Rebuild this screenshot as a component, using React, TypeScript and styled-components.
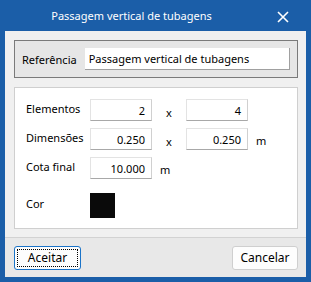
import styled, { createGlobalStyle } from 'styled-components';

const GlobalStyle = createGlobalStyle`
  *, *::after, *::before {
    box-sizing: border-box;
  }
  html, body {
    margin: 0;
    padding: 0;
    background: #ffffff;
  }
  body {
    font-family: 'Noto Sans', 'Open Sans', sans-serif;
    font-size: 11px;
    color: #000000;
  }
`;

const rows = [
  { label: 'Elementos', a: '2', b: '4', unit: '' },
  { label: 'Dimensões', a: '0.250', b: '0.250', unit: 'm' },
];

function App() {
  return (
    <>
      <GlobalStyle />
      <Window>
        <TitleBar>
          <Title>Passagem vertical de tubagens</Title>
          <CloseButton>
            <svg width="12" height="12" viewBox="0 0 12 12">
              <path d="M1 1 L11 11 M11 1 L1 11" stroke="#ffffff" strokeWidth="1.6" />
            </svg>
          </CloseButton>
        </TitleBar>
        <Body>
          <RefBox>
            <RefLabel>Referência</RefLabel>
            <RefInput>Passagem vertical de tubagens</RefInput>
          </RefBox>
          <Panel>
            {rows.map((row) => (
              <Row key={row.label}>
                <Label>{row.label}</Label>
                <NumField>{row.a}</NumField>
                <Times>x</Times>
                <NumField>{row.b}</NumField>
                <Unit>{row.unit}</Unit>
              </Row>
            ))}
            <Row>
              <Label>Cota final</Label>
              <NumField>10.000</NumField>
              <Unit>m</Unit>
            </Row>
            <ColorRow>
              <Label>Cor</Label>
              <Swatch />
            </ColorRow>
          </Panel>
        </Body>
        <Footer>
          <Button $primary>
            <FocusRing>Aceitar</FocusRing>
          </Button>
          <Button>Cancelar</Button>
        </Footer>
      </Window>
    </>
  );
}

export default App;

const Window = styled.div`
  width: 311px;
  height: 282px;
  background: #1b5ea8;
  padding: 0 5px 5px 5px;
  display: flex;
  flex-direction: column;
`;

const TitleBar = styled.div`
  height: 31px;
  display: flex;
  align-items: center;
  justify-content: center;
  position: relative;
  color: #ffffff;
  padding-right: 48px;
`;

const Title = styled.div`
  font-size: 11px;
  padding-bottom: 1px;
`;

const CloseButton = styled.div`
  position: absolute;
  right: 17px;
  top: 11px;
  width: 12px;
  height: 12px;
  display: flex;
`;

const Body = styled.div`
  background: #f0f0f0;
  flex: 1;
  padding: 9px 8px 0 9px;
  display: flex;
  flex-direction: column;
  gap: 9px;
`;

const RefBox = styled.div`
  height: 38px;
  border: 1px solid #7a7a7a;
  background: #e6e6e6;
  display: flex;
  align-items: center;
  padding: 0 7px 0 7px;
  gap: 8px;
`;

const RefLabel = styled.div`
  padding-top: 1px;
`;

const RefInput = styled.div`
  flex: 1;
  height: 22px;
  background: #ffffff;
  border-right: 1px solid #a0a0a0;
  border-bottom: 1px solid #a0a0a0;
  display: flex;
  align-items: center;
  padding: 0 4px;
`;

const Panel = styled.div`
  height: 142px;
  background: #ffffff;
  border: 1px solid #cfcfcf;
  padding: 11px 0 0 11px;
  display: flex;
  flex-direction: column;
  gap: 7px;
`;

const Row = styled.div`
  display: flex;
  align-items: center;
  height: 22px;
`;

const ColorRow = styled(Row)`
  height: 25px;
  margin-top: 7px;
`;

const Label = styled.div`
  width: 64px;
  margin-top: -4px;
`;

const NumField = styled.div`
  width: 62px;
  height: 22px;
  border: 1px solid #e3e3e3;
  border-bottom-color: #a8a8a8;
  border-right-color: #d0d0d0;
  display: flex;
  align-items: center;
  justify-content: flex-end;
  padding: 0 6px;
`;

const Times = styled.div`
  width: 34px;
  text-align: center;
  padding-top: 4px;
`;

const Unit = styled.div`
  padding-left: 8px;
  padding-top: 2px;
`;

const Swatch = styled.div`
  width: 25px;
  height: 25px;
  background: #0a0a0a;
`;

const Footer = styled.div`
  height: 40px;
  background: #e8e8e8;
  border-top: 1px solid #d2d2d2;
  display: flex;
  align-items: center;
  justify-content: space-between;
  padding: 0 8px 0 9px;
`;

const Button = styled.div<{ $primary?: boolean }>`
  width: ${(p) => (p.$primary ? '67px' : '66px')};
  height: 24px;
  background: #fdfdfd;
  border: 1px solid ${(p) => (p.$primary ? '#1a73c8' : '#cfcfcf')};
  border-radius: 3px;
  display: flex;
  align-items: center;
  justify-content: center;
  padding: 2px;
  font-size: 12px;
`;

const FocusRing = styled.div`
  width: 100%;
  height: 100%;
  border: 1px dotted #000000;
  display: flex;
  align-items: center;
  justify-content: center;
`;
